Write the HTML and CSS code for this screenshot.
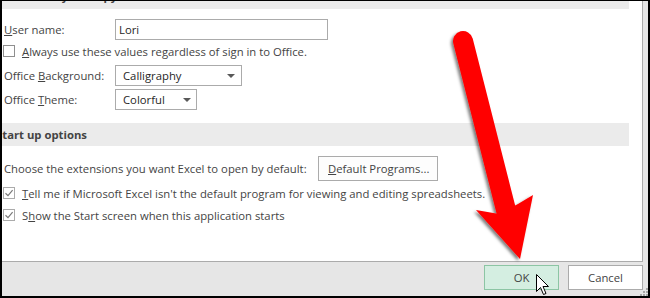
FILE: index.html
```html
<!DOCTYPE html>
<html lang="en">
<head>
<meta charset="utf-8">
<title>Excel Options</title>
<link rel="stylesheet" href="styles.css">
</head>
<body>
<div class="frame">
  <div class="panel">
    <div class="head-bar"><span class="head-text">Personalize your copy of Microsoft Office</span></div>
    <div class="group">
      <div class="row row-user">
        <span class="lbl"><u>U</u>ser name:</span>
        <div class="input">Lori</div>
      </div>
      <div class="row row-check">
        <span class="cb"></span>
        <span><u>A</u>lways use these values regardless of sign in to Office.</span>
      </div>
      <div class="row row-bg">
        <span class="lbl">Office <u>B</u>ackground:</span>
        <div class="select wide"><span>Calligraphy</span><span class="caret"></span></div>
      </div>
      <div class="row row-theme">
        <span class="lbl">Office <u>T</u>heme:</span>
        <div class="select narrow"><span>Colorful</span><span class="caret"></span></div>
      </div>
    </div>
    <div class="section-bar"><span class="section-text">Start up options</span></div>
    <div class="group">
      <div class="row row-choose">
        <span class="lbl-long">Choose the extensions you want Excel to open by default:</span>
        <div class="btn-default"><u>D</u>efault Programs...</div>
      </div>
      <div class="row row-tell">
        <span class="cb checked"><svg width="10" height="10" viewBox="0 0 10 10"><path d="M1.5 5.2 L4 7.6 L8.6 2.2" fill="none" stroke="#7a7a7a" stroke-width="1.2"/></svg></span>
        <span><u>T</u>ell me if Microsoft Excel isn't the default program for viewing and editing spreadsheets.</span>
      </div>
      <div class="row row-show">
        <span class="cb checked"><svg width="10" height="10" viewBox="0 0 10 10"><path d="M1.5 5.2 L4 7.6 L8.6 2.2" fill="none" stroke="#7a7a7a" stroke-width="1.2"/></svg></span>
        <span>S<u>h</u>ow the Start screen when this application starts</span>
      </div>
    </div>
  </div>
  <div class="footer">
    <div class="btn ok">OK</div>
    <div class="btn cancel">Cancel</div>
  </div>
</div>

<svg class="arrow" width="650" height="298" viewBox="0 0 650 298">
  <defs>
    <filter id="sh" x="-30%" y="-10%" width="160%" height="130%">
      <feDropShadow dx="-2" dy="2" stdDeviation="1.6" flood-color="#000" flood-opacity="0.5"/>
    </filter>
  </defs>
  <g filter="url(#sh)">
    <line x1="463" y1="41" x2="507" y2="214" stroke="#ff0000" stroke-width="20" stroke-linecap="round"/>
    <polygon points="476,210 499,214 518,204 533,195 520,259" fill="#ff0000"/>
  </g>
</svg>

<svg class="cursor" width="13" height="22" viewBox="0 0 13 22">
  <path d="M0.5 0.5 L0.5 17.5 L4.5 13.5 L7.5 20.5 L10 19.5 L7 12.5 L12.5 12.5 Z" fill="#fff" stroke="#000" stroke-width="1" stroke-linejoin="miter"/>
</svg>

<svg class="grip" width="8" height="8" viewBox="0 0 8 8">
  <rect x="6" y="0" width="2" height="2" fill="#a6a6a6"/>
  <rect x="3" y="3" width="2" height="2" fill="#a6a6a6"/>
  <rect x="6" y="3" width="2" height="2" fill="#a6a6a6"/>
  <rect x="0" y="6" width="2" height="2" fill="#a6a6a6"/>
  <rect x="3" y="6" width="2" height="2" fill="#a6a6a6"/>
  <rect x="6" y="6" width="2" height="2" fill="#a6a6a6"/>
</svg>
</body>
</html>
```

FILE: styles.css
```css
html, body {
  margin: 0;
  padding: 0;
}

body {
  width: 650px;
  height: 298px;
  overflow: hidden;
  position: relative;
  font-family: "Open Sans", "Noto Sans", sans-serif;
  font-size: 11.3px;
  color: #444444;
}

.frame {
  box-sizing: border-box;
  width: 650px;
  height: 298px;
  border-style: solid;
  border-color: #000;
  border-width: 1px 2px 2px 2px;
  background: #e6e6e6;
  display: flex;
  flex-direction: column;
}

.panel {
  flex: none;
  box-sizing: border-box;
  width: 641px;
  height: 261px;
  background: #fff;
  border-right: 1px solid #ababab;
  border-bottom: 1px solid #ababab;
  overflow: hidden;
  display: flex;
  flex-direction: column;
}

.head-bar {
  flex: none;
  width: 627px;
  height: 8px;
  background: #ebebeb;
  overflow: hidden;
}

.head-text {
  display: block;
  font-weight: bold;
  line-height: 14px;
  margin-top: -12px;
  margin-left: -8px;
  white-space: nowrap;
}

.group {
  padding-left: 2px;
  display: flex;
  flex-direction: column;
}

.row {
  display: flex;
  align-items: center;
  white-space: nowrap;
}

.lbl {
  flex: none;
  width: 111px;
}

.row-user {
  margin-top: 10px;
  height: 21px;
}

.input {
  box-sizing: border-box;
  width: 213px;
  height: 21px;
  border: 1px solid #ababab;
  padding-left: 3px;
  display: flex;
  align-items: center;
  color: #262626;
}

.row-check {
  margin-top: 5px;
  height: 12px;
  margin-left: -1px;
}

.cb {
  flex: none;
  box-sizing: border-box;
  width: 12px;
  height: 12px;
  border: 1px solid #8f8f8f;
  background: #fff;
  margin-right: 7px;
  display: flex;
  align-items: center;
  justify-content: center;
}

.cb.checked {
  border-color: #ababab;
}

.row-bg {
  margin-top: 8px;
  height: 21px;
}

.row-theme {
  margin-top: 3px;
  height: 21px;
}

.select {
  box-sizing: border-box;
  height: 21px;
  border: 1px solid #ababab;
  display: flex;
  align-items: center;
  justify-content: space-between;
  padding: 0 6px 0 7px;
  color: #262626;
}

.select.wide {
  width: 127px;
}

.select.narrow {
  width: 82px;
  padding-right: 5px;
}

.caret {
  width: 0;
  height: 0;
  border-left: 4px solid transparent;
  border-right: 4px solid transparent;
  border-top: 4px solid #595959;
}

.section-bar {
  flex: none;
  margin-top: 13px;
  width: 627px;
  height: 23px;
  background: #ebebeb;
  display: flex;
  align-items: center;
  font-weight: bold;
  white-space: nowrap;
}

.section-text {
  margin-left: -6px;
}

.row-choose {
  margin-top: 10px;
  height: 25px;
}

.lbl-long {
  flex: none;
  width: 314px;
}

.btn-default {
  box-sizing: border-box;
  width: 120px;
  height: 25px;
  border: 1px solid #ababab;
  background: #fdfdfd;
  padding-left: 9px;
  display: flex;
  align-items: center;
}

.row-tell {
  margin-top: 6px;
  height: 12px;
  margin-left: -1px;
}

.row-show {
  margin-top: 10px;
  height: 12px;
  margin-left: -1px;
}

.footer {
  flex: 1;
  display: flex;
  justify-content: flex-end;
  align-items: flex-start;
  padding-top: 3px;
  padding-right: 5px;
  gap: 9px;
}

.btn {
  box-sizing: border-box;
  width: 75px;
  height: 25px;
  display: flex;
  align-items: center;
  justify-content: center;
  font-size: 11.3px;
  color: #444;
}

.btn.ok {
  background: #d4eee1;
  border: 1px solid #8cc5a4;
}

.btn.cancel {
  background: #fff;
  border: 1px solid #ababab;
}

.arrow {
  position: absolute;
  left: 0;
  top: 0;
  pointer-events: none;
}

.cursor {
  position: absolute;
  left: 536px;
  top: 274px;
  pointer-events: none;
}

.grip {
  position: absolute;
  left: 640px;
  top: 288px;
}
```
